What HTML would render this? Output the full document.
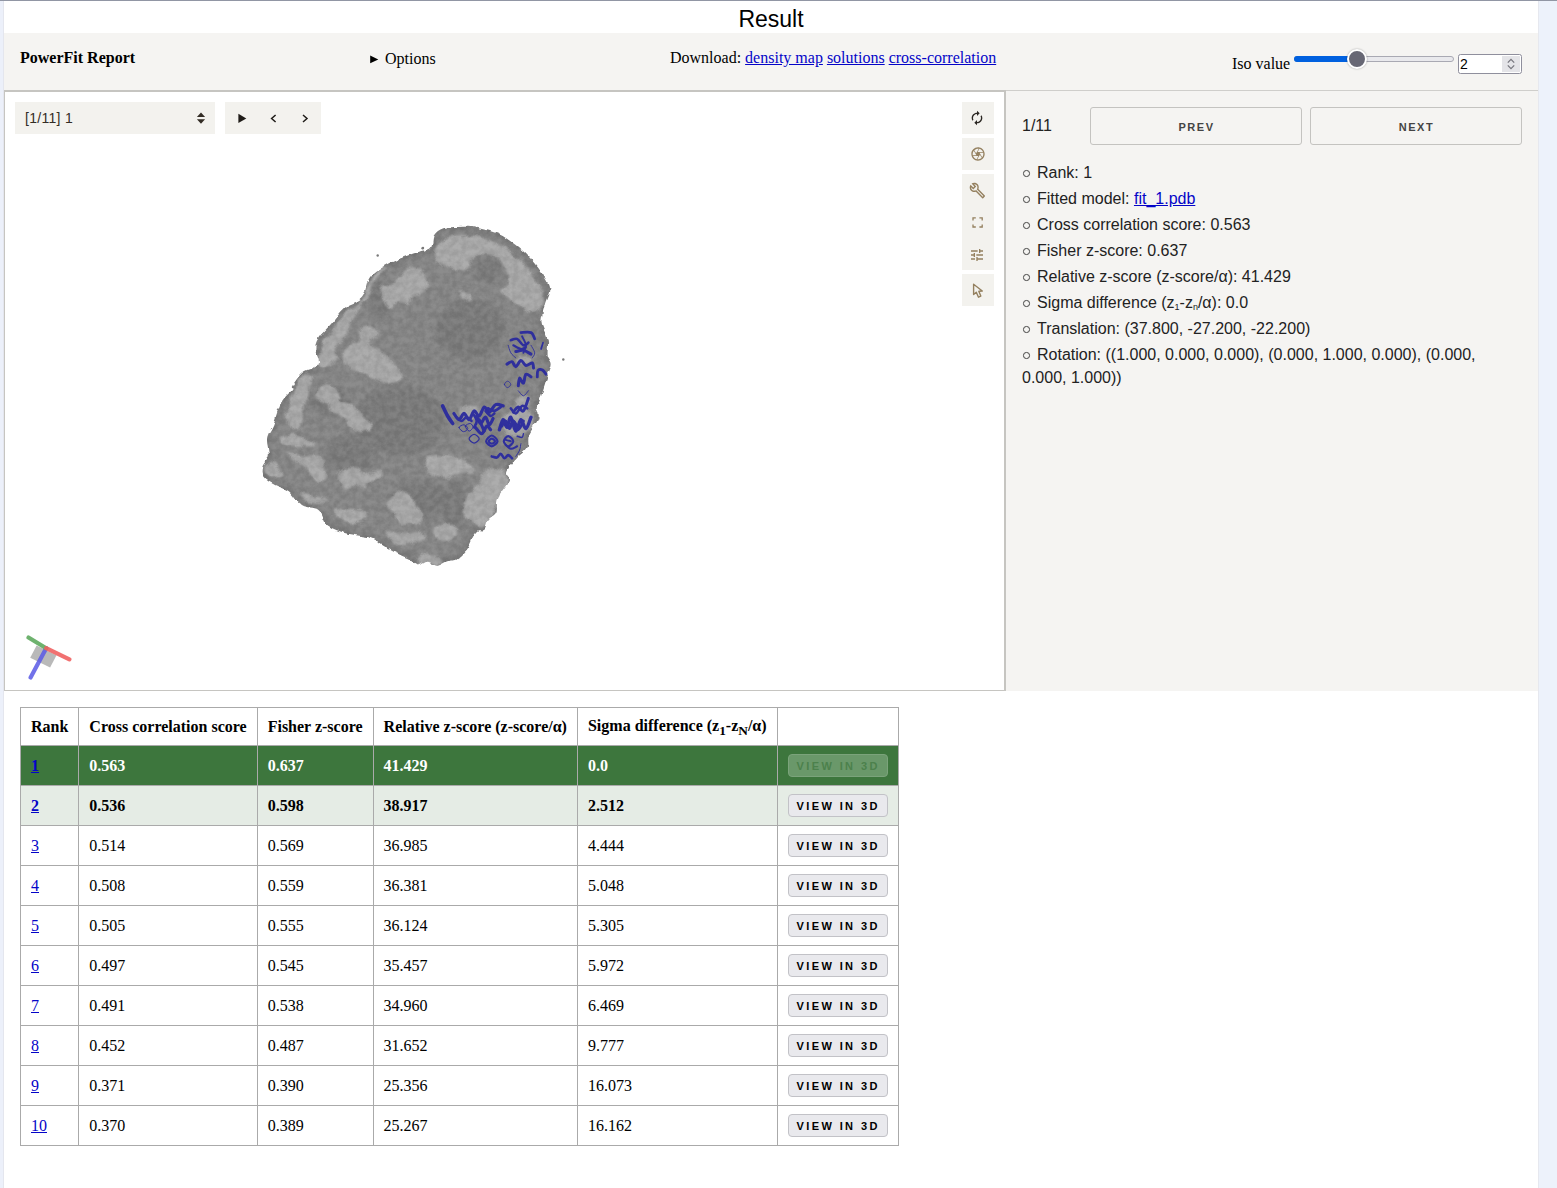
<!DOCTYPE html>
<html>
<head>
<meta charset="utf-8">
<title>Result</title>
<style>
html,body{margin:0;padding:0;}
body{width:1557px;height:1188px;position:relative;overflow:hidden;background:#fff;font-family:"Liberation Serif",serif;font-size:16px;color:#000;}
.abs{position:absolute;}
.sans{font-family:"Liberation Sans",sans-serif;}
a{color:#0404c8;text-decoration:underline;}
#lstrip{left:0;top:0;width:4px;height:1188px;background:#ecf0fa;border-right:1px solid #e4e6ee;box-sizing:border-box;}
#rstrip{left:1538px;top:0;width:19px;height:1188px;background:#edf2fb;border-left:1px solid #e6e8ef;box-sizing:border-box;}
#topline{left:0;top:0;width:1557px;height:1px;background:#9196a4;}
#title{left:4px;top:5px;width:1534px;text-align:center;font-family:"Liberation Sans",sans-serif;font-size:23px;line-height:28px;color:#000;}
#hdr{left:4px;top:33px;width:1534px;height:57px;background:#f5f4f2;}
#hdrline{left:4px;top:90px;width:1534px;height:1px;background:#cfcecb;}
#viewer{left:4px;top:90px;width:1002px;height:601px;background:#fff;border:1px solid #c6c5c1;border-top-width:2px;border-right-width:2px;box-sizing:border-box;}
#side{left:1006px;top:91px;width:532px;height:600px;background:#f5f4f2;}
.ctl{background:#f3f2ee;}
.ic{background:#f3f2ee;width:32px;}
ul#info{list-style:none;margin:0;padding:0;left:1022px;top:161px;width:500px;font-family:"Liberation Sans",sans-serif;font-size:16px;line-height:23px;color:#222;}
ul#info li{margin:0 0 3px 0;padding:0;}
ul#info li:before{content:"";display:inline-block;width:4.5px;height:4.5px;border:1px solid #444;border-radius:50%;margin:0 7.5px 1px 1px;vertical-align:middle;}
.navbtn{height:38px;box-sizing:border-box;border:1px solid #c4c3c0;border-radius:3px;background:#f5f4f2;font-family:"Liberation Sans",sans-serif;font-weight:bold;font-size:11px;letter-spacing:1.5px;color:#444;text-align:center;line-height:39px;text-indent:1px;}
table#res{border-collapse:collapse;left:20px;top:707px;font-family:"Liberation Serif",serif;font-size:16px;}
table#res th,table#res td{border:1px solid #aaa;padding:0 10px;height:40px;text-align:left;box-sizing:border-box;white-space:nowrap;}
table#res th{font-weight:bold;height:38px;}
tr.sel td{background:#3d763d;color:#fff;font-weight:bold;}
tr.hl td{background:#e5ece5;font-weight:bold;}
.vbtn{display:inline-block;width:100px;height:23px;box-sizing:border-box;border:1px solid #c2c2c7;border-radius:4px;background:#e9e9ed;font-family:"Liberation Sans",sans-serif;font-weight:bold;font-size:11px;letter-spacing:2.4px;line-height:23px;text-indent:1px;text-align:center;color:#000;vertical-align:middle;}
tr.sel .vbtn{background:#6a986a;border-color:#7ba37b;color:#4c814c;}
</style>
</head>
<body>
<div id="lstrip" class="abs"></div>
<div id="rstrip" class="abs"></div>
<div id="topline" class="abs"></div>
<div id="title" class="abs">Result</div>
<div id="hdr" class="abs"></div>
<div id="hdrline" class="abs"></div>
<div class="abs" style="left:20px;top:49px;font-weight:bold;font-size:16px;line-height:18px;">PowerFit Report</div>
<svg class="abs" style="left:368px;top:52px" width="14" height="14" viewBox="368 52 14 14"><path d="M370.200 55.500 L378.300 59.400 L370.200 63.300Z" fill="#000"/></svg>
<div class="abs" style="left:385px;top:50px;font-size:16px;line-height:18px;">Options</div>
<div class="abs" style="left:670px;top:49px;font-size:16px;line-height:18px;white-space:nowrap;">Download: <a>density map</a> <a>solutions</a> <a>cross-correlation</a></div>
<div class="abs" style="left:1232px;top:55px;font-size:16px;line-height:18px;">Iso value</div>
<!-- slider -->
<div class="abs" style="left:1294px;top:56px;width:160px;height:6px;box-sizing:border-box;border:1px solid #a9a9b3;border-radius:3px;background:#e9e9ed;"></div>
<div class="abs" style="left:1294px;top:56px;width:62px;height:6px;border-radius:3px 0 0 3px;background:#0060df;"></div>
<div class="abs" style="left:1346.700px;top:49px;width:16px;height:16px;border:2px solid #fff;border-radius:50%;background:#676774;box-shadow:0 0 2px rgba(0,0,0,.35);"></div>
<!-- number -->
<div class="abs sans" style="left:1458px;top:54px;width:64px;height:20px;box-sizing:border-box;border:1px solid #8f8f9d;border-radius:2.5px;background:#fff;font-size:14px;line-height:19px;padding-left:1px;">2</div>
<div class="abs" style="left:1502px;top:56px;width:18px;height:16px;background:#e4e4e8;"></div>
<svg class="abs" style="left:1502px;top:56px" width="18" height="16" viewBox="0 0 18 16"><path d="M5.800 6.600 L9 3.400 L12.200 6.600 M5.800 9.400 L9 12.600 L12.200 9.400" fill="none" stroke="#77777f" stroke-width="1.3"/></svg>

<div id="viewer" class="abs"></div>
<!--BLOB-START--><svg class="abs" style="left:0;top:0" width="1005" height="690" viewBox="0 0 1005 690">
<defs><filter id="b1" x="-20%" y="-20%" width="140%" height="140%" color-interpolation-filters="sRGB"><feGaussianBlur stdDeviation="1.1" result="g"/><feTurbulence type="fractalNoise" baseFrequency="0.09" numOctaves="2" seed="5" result="t"/><feDisplacementMap in="g" in2="t" scale="7" xChannelSelector="R" yChannelSelector="G"/></filter><filter id="b2" x="-20%" y="-20%" width="140%" height="140%"><feGaussianBlur stdDeviation="2.5"/></filter><filter id="rg" x="-5%" y="-5%" width="110%" height="110%" color-interpolation-filters="sRGB"><feTurbulence type="fractalNoise" baseFrequency="0.13" numOctaves="2" seed="2" result="t"/><feDisplacementMap in="SourceGraphic" in2="t" scale="5" xChannelSelector="R" yChannelSelector="G" result="d"/><feGaussianBlur in="d" stdDeviation="0.75"/></filter><filter id="nz" x="0" y="0" width="100%" height="100%" color-interpolation-filters="sRGB"><feTurbulence type="fractalNoise" baseFrequency="0.16" numOctaves="4" seed="11"/><feColorMatrix type="matrix" values="2.2 0 0 0 -0.6  2.2 0 0 0 -0.6  2.2 0 0 0 -0.6  0 0 0 0 0.06"/></filter><mask id="bm" maskUnits="userSpaceOnUse" x="250" y="215" width="320" height="365"><path d="M420.0 251.6 C424.2 250.2 428.6 250.4 430.9 247.7 C433.2 245.0 431.9 238.5 434.0 235.2 C436.1 232.0 439.2 229.6 443.4 228.2 C447.5 226.9 453.7 227.3 458.9 227.1 C464.1 227.0 468.0 226.4 474.5 227.5 C481.0 228.6 491.1 230.8 497.9 233.7 C504.6 236.5 509.8 240.7 515.0 244.6 C520.2 248.5 524.6 252.4 529.0 257.1 C533.4 261.7 538.1 267.4 541.5 272.6 C544.9 277.8 548.8 282.8 549.3 288.2 C549.8 293.7 545.9 299.6 544.6 305.3 C543.3 311.1 541.0 316.8 541.5 322.5 C542.0 328.2 546.7 334.2 547.7 339.6 C548.8 345.1 547.1 351.0 547.7 355.2 C548.4 359.3 551.9 360.4 551.6 364.5 C551.4 368.7 548.1 374.2 546.2 380.1 C544.2 386.0 541.5 395.5 539.9 400.0 C538.4 404.6 537.1 404.1 536.8 407.1 C536.6 410.1 539.7 413.4 538.4 418.0 C537.1 422.7 530.9 430.2 529.0 435.2 C527.2 440.1 529.6 443.7 527.5 447.6 C525.4 451.5 519.9 454.6 516.6 458.5 C513.2 462.4 508.5 467.1 507.2 471.0 C505.9 474.9 510.3 477.2 508.8 481.9 C507.2 486.6 500.0 493.8 497.9 499.0 C495.8 504.2 497.9 509.5 496.3 513.1 C494.8 516.6 490.5 517.8 488.5 520.6 C486.5 523.4 486.3 528.1 484.4 529.8 C482.5 531.5 479.3 529.3 477.2 530.8 C475.1 532.3 473.7 535.9 472.0 539.0 C470.3 542.1 469.4 545.9 466.9 549.3 C464.4 552.6 460.4 557.1 457.1 559.1 C453.9 561.1 450.8 560.1 447.4 561.2 C444.0 562.3 440.0 565.7 436.6 565.8 C433.2 565.9 430.1 561.8 426.8 561.7 C423.5 561.6 420.1 565.8 417.0 565.3 C413.9 564.8 412.0 560.8 408.3 558.6 C404.6 556.5 399.3 554.6 395.0 552.4 C390.7 550.2 386.6 547.6 382.6 545.2 C378.7 542.8 377.3 540.0 371.3 538.0 C365.3 536.0 353.8 535.4 346.6 533.3 C339.3 531.2 332.6 529.4 327.9 525.5 C323.2 521.6 322.9 513.3 318.5 509.9 C314.1 506.6 306.3 508.4 301.4 505.3 C296.5 502.1 293.4 494.6 288.9 491.2 C284.5 487.9 279.1 487.4 274.9 485.0 C270.8 482.7 266.0 480.3 264.0 477.2 C262.1 474.1 262.5 470.0 263.2 466.3 C264.0 462.7 268.0 460.1 268.7 455.4 C269.3 450.7 266.4 443.5 267.1 438.3 C267.9 433.1 271.0 430.2 273.4 424.3 C275.7 418.3 278.0 408.2 281.2 402.5 C284.3 396.7 290.2 392.7 292.1 390.0 C293.9 387.3 290.2 389.3 292.1 386.3 C293.9 383.4 298.5 376.0 303.0 372.3 C307.4 368.7 316.5 368.4 318.5 364.5 C320.6 360.6 315.4 353.4 315.4 349.0 C315.4 344.5 315.9 342.2 318.5 338.1 C321.1 333.9 326.6 329.1 331.0 324.0 C335.4 319.0 339.8 312.1 345.0 307.7 C350.2 303.3 358.0 302.6 362.1 297.6 C366.3 292.5 365.8 282.8 369.9 277.3 C374.1 271.9 381.1 268.3 387.1 264.8 C393.0 261.3 400.3 258.5 405.8 256.3 C411.3 254.1 415.8 253.0 420.0 251.6Z" fill="#fff" filter="url(#rg)"/></mask></defs>
<g mask="url(#bm)">
<rect x="250" y="215" width="320" height="365" fill="#858585"/>
<path d="M420.0 251.6 C424.2 250.2 428.6 250.4 430.9 247.7 C433.2 245.0 431.9 238.5 434.0 235.2 C436.1 232.0 439.2 229.6 443.4 228.2 C447.5 226.9 453.7 227.3 458.9 227.1 C464.1 227.0 468.0 226.4 474.5 227.5 C481.0 228.6 491.1 230.8 497.9 233.7 C504.6 236.5 509.8 240.7 515.0 244.6 C520.2 248.5 524.6 252.4 529.0 257.1 C533.4 261.7 538.1 267.4 541.5 272.6 C544.9 277.8 548.8 282.8 549.3 288.2 C549.8 293.7 545.9 299.6 544.6 305.3 C543.3 311.1 541.0 316.8 541.5 322.5 C542.0 328.2 546.7 334.2 547.7 339.6 C548.8 345.1 547.1 351.0 547.7 355.2 C548.4 359.3 551.9 360.4 551.6 364.5 C551.4 368.7 548.1 374.2 546.2 380.1 C544.2 386.0 541.5 395.5 539.9 400.0 C538.4 404.6 537.1 404.1 536.8 407.1 C536.6 410.1 539.7 413.4 538.4 418.0 C537.1 422.7 530.9 430.2 529.0 435.2 C527.2 440.1 529.6 443.7 527.5 447.6 C525.4 451.5 519.9 454.6 516.6 458.5 C513.2 462.4 508.5 467.1 507.2 471.0 C505.9 474.9 510.3 477.2 508.8 481.9 C507.2 486.6 500.0 493.8 497.9 499.0 C495.8 504.2 497.9 509.5 496.3 513.1 C494.8 516.6 490.5 517.8 488.5 520.6 C486.5 523.4 486.3 528.1 484.4 529.8 C482.5 531.5 479.3 529.3 477.2 530.8 C475.1 532.3 473.7 535.9 472.0 539.0 C470.3 542.1 469.4 545.9 466.9 549.3 C464.4 552.6 460.4 557.1 457.1 559.1 C453.9 561.1 450.8 560.1 447.4 561.2 C444.0 562.3 440.0 565.7 436.6 565.8 C433.2 565.9 430.1 561.8 426.8 561.7 C423.5 561.6 420.1 565.8 417.0 565.3 C413.9 564.8 412.0 560.8 408.3 558.6 C404.6 556.5 399.3 554.6 395.0 552.4 C390.7 550.2 386.6 547.6 382.6 545.2 C378.7 542.8 377.3 540.0 371.3 538.0 C365.3 536.0 353.8 535.4 346.6 533.3 C339.3 531.2 332.6 529.4 327.9 525.5 C323.2 521.6 322.9 513.3 318.5 509.9 C314.1 506.6 306.3 508.4 301.4 505.3 C296.5 502.1 293.4 494.6 288.9 491.2 C284.5 487.9 279.1 487.4 274.9 485.0 C270.8 482.7 266.0 480.3 264.0 477.2 C262.1 474.1 262.5 470.0 263.2 466.3 C264.0 462.7 268.0 460.1 268.7 455.4 C269.3 450.7 266.4 443.5 267.1 438.3 C267.9 433.1 271.0 430.2 273.4 424.3 C275.7 418.3 278.0 408.2 281.2 402.5 C284.3 396.7 290.2 392.7 292.1 390.0 C293.9 387.3 290.2 389.3 292.1 386.3 C293.9 383.4 298.5 376.0 303.0 372.3 C307.4 368.7 316.5 368.4 318.5 364.5 C320.6 360.6 315.4 353.4 315.4 349.0 C315.4 344.5 315.9 342.2 318.5 338.1 C321.1 333.9 326.6 329.1 331.0 324.0 C335.4 319.0 339.8 312.1 345.0 307.7 C350.2 303.3 358.0 302.6 362.1 297.6 C366.3 292.5 365.8 282.8 369.9 277.3 C374.1 271.9 381.1 268.3 387.1 264.8 C393.0 261.3 400.3 258.5 405.8 256.3 C411.3 254.1 415.8 253.0 420.0 251.6Z" fill="none" stroke="#777777" stroke-width="7" filter="url(#b2)"/>
<g filter="url(#b2)" fill="#7a7a7a">
<ellipse cx="488.5" cy="269.5" rx="14.0" ry="14.0"/>
<ellipse cx="470.0" cy="330.0" rx="35.0" ry="30.0"/>
<ellipse cx="400.0" cy="420.0" rx="45.0" ry="35.0"/>
<ellipse cx="350.0" cy="455.0" rx="25.0" ry="20.0"/>
<ellipse cx="420.0" cy="500.0" rx="30.0" ry="20.0"/>
<ellipse cx="330.0" cy="400.0" rx="20.0" ry="15.0"/>
<ellipse cx="455.0" cy="505.0" rx="12.0" ry="25.0"/>
<ellipse cx="380.0" cy="300.0" rx="10.0" ry="20.0"/>
</g>
<g filter="url(#b1)" fill="#b0b0b0" opacity="0.82">
<path d="M387.1 266.4 C386.6 268.2 377.7 275.2 374.6 280.4 C371.5 285.6 371.0 292.9 368.4 297.6 C365.8 302.2 362.1 303.5 359.0 308.5 C355.9 313.4 352.3 322.0 349.7 327.1 C347.1 332.3 346.1 336.2 343.5 339.6 C340.9 343.0 335.2 344.3 334.1 347.4 C333.1 350.5 338.3 354.9 337.2 358.3 C336.2 361.7 331.0 366.6 327.9 367.6 C324.8 368.7 319.8 367.6 318.5 364.5 C317.2 361.4 318.0 354.1 320.1 349.0 C322.2 343.8 327.1 339.1 331.0 333.4 C334.9 327.7 338.8 319.6 343.5 314.7 C348.1 309.8 354.9 309.0 359.0 303.8 C363.2 298.6 365.3 289.2 368.4 283.5 C371.5 277.8 374.6 272.4 377.7 269.5 C380.8 266.7 387.6 264.6 387.1 266.4Z"/>
<path d="M405.8 268.0 C409.4 266.7 417.7 267.2 421.3 269.5 C425.0 271.9 427.6 278.1 427.6 282.0 C427.6 285.9 423.9 290.5 421.3 292.9 C418.7 295.2 414.1 294.2 412.0 296.0 C409.9 297.8 411.0 302.7 408.9 303.8 C406.8 304.8 402.6 301.4 399.5 302.2 C396.4 303.0 392.5 308.5 390.2 308.5 C387.9 308.5 387.1 305.6 385.5 302.2 C384.0 298.9 380.1 291.3 380.8 288.2 C381.6 285.1 387.1 285.4 390.2 283.5 C393.3 281.7 396.9 279.9 399.5 277.3 C402.1 274.7 402.1 269.3 405.8 268.0Z"/>
<path d="M360.6 327.1 C363.2 325.3 371.8 327.1 374.6 328.7 C377.5 330.3 378.8 334.4 377.7 336.5 C376.7 338.6 368.9 339.1 368.4 341.2 C367.9 343.2 371.8 346.6 374.6 349.0 C377.5 351.3 381.9 352.1 385.5 355.2 C389.1 358.3 393.6 363.8 396.4 367.6 C399.3 371.5 403.7 376.0 402.6 378.6 C401.6 381.1 394.3 383.0 390.2 383.2 C386.0 383.5 381.9 381.9 377.7 380.1 C373.6 378.3 369.4 374.1 365.3 372.3 C361.1 370.5 356.4 370.8 352.8 369.2 C349.2 367.6 345.0 365.8 343.5 363.0 C341.9 360.1 342.2 354.9 343.5 352.1 C344.8 349.2 348.7 347.9 351.2 345.8 C353.8 343.8 357.5 342.7 359.0 339.6 C360.6 336.5 358.0 329.0 360.6 327.1Z"/>
<path d="M303.0 373.9 C305.6 372.3 311.3 374.4 312.3 377.0 C313.3 379.6 310.2 385.6 309.2 389.5 C308.2 393.3 308.7 398.3 306.1 400.0 C303.5 401.8 295.2 402.3 293.6 400.0 C292.1 397.8 295.2 390.7 296.7 386.3 C298.3 382.0 300.4 375.4 303.0 373.9Z"/>
<path d="M323.2 384.8 C325.8 384.0 331.3 384.8 334.1 386.3 C337.0 387.9 339.6 391.8 340.3 394.1 C341.1 396.4 342.7 399.1 338.8 400.0 C334.9 401.0 320.4 401.6 317.0 400.0 C313.6 398.5 317.5 393.6 318.5 391.0 C319.6 388.5 320.6 385.6 323.2 384.8Z"/>
<path d="M296.7 390.0 C299.3 389.0 303.5 395.2 304.5 399.3 C305.6 403.5 303.7 410.0 303.0 414.9 C302.2 419.9 301.7 426.3 299.8 428.9 C298.0 431.5 294.1 431.8 292.1 430.5 C290.0 429.2 287.9 425.3 287.4 421.2 C286.9 417.0 287.4 410.8 288.9 405.6 C290.5 400.4 294.1 391.0 296.7 390.0Z"/>
<path d="M318.5 391.6 C321.1 390.3 330.5 389.7 334.1 391.6 C337.7 393.4 337.2 400.1 340.3 402.5 C343.5 404.8 348.7 403.2 352.8 405.6 C357.0 407.9 362.1 412.6 365.3 416.5 C368.4 420.4 371.5 426.6 371.5 428.9 C371.5 431.3 367.3 430.0 365.3 430.5 C363.2 431.0 361.6 432.8 359.0 432.1 C356.4 431.3 352.3 428.4 349.7 425.8 C347.1 423.2 346.6 418.8 343.5 416.5 C340.3 414.1 333.6 413.9 331.0 411.8 C328.4 409.7 330.0 406.1 327.9 404.0 C325.8 401.9 320.1 401.4 318.5 399.3 C317.0 397.3 315.9 392.9 318.5 391.6Z"/>
<path d="M281.2 438.3 C282.7 436.7 288.4 434.7 293.6 435.2 C298.8 435.7 309.2 439.6 312.3 441.4 C315.4 443.2 314.9 445.3 312.3 446.1 C309.7 446.9 301.4 446.3 296.7 446.1 C292.1 445.8 286.9 445.8 284.3 444.5 C281.7 443.2 279.6 439.8 281.2 438.3Z"/>
<path d="M290.5 452.3 C292.6 452.0 299.8 456.5 304.5 457.0 C309.2 457.5 315.2 453.6 318.5 455.4 C321.9 457.2 323.5 464.2 324.8 467.9 C326.1 471.5 327.6 474.9 326.3 477.2 C325.0 479.6 319.6 482.4 317.0 481.9 C314.4 481.4 313.1 477.0 310.7 474.1 C308.4 471.3 306.1 467.4 303.0 464.8 C299.8 462.2 294.1 460.6 292.1 458.5 C290.0 456.5 288.4 452.6 290.5 452.3Z"/>
<path d="M343.5 469.4 C346.6 467.6 354.4 467.1 357.5 467.9 C360.6 468.7 358.3 473.6 362.1 474.1 C366.0 474.6 377.5 470.5 380.8 471.0 C384.2 471.5 384.7 475.4 382.4 477.2 C380.1 479.0 369.7 480.1 366.8 481.9 C364.0 483.7 367.1 487.9 365.3 488.1 C363.4 488.4 359.0 483.2 355.9 483.5 C352.8 483.7 349.4 490.5 346.6 489.7 C343.7 488.9 339.3 482.2 338.8 478.8 C338.3 475.4 340.3 471.3 343.5 469.4Z"/>
<path d="M267.1 463.2 C268.7 461.9 272.3 461.4 274.9 463.2 C277.5 465.0 283.2 471.8 282.7 474.1 C282.2 476.4 274.7 477.7 271.8 477.2 C269.0 476.7 266.4 473.3 265.6 471.0 C264.8 468.7 265.6 464.5 267.1 463.2Z"/>
<path d="M334.1 508.4 C335.9 507.1 344.5 509.4 349.7 509.9 C354.9 510.5 362.4 509.9 365.3 511.5 C368.1 513.1 368.9 517.5 366.8 519.3 C364.7 521.1 357.5 522.7 352.8 522.4 C348.1 522.1 341.9 520.1 338.8 517.7 C335.7 515.4 332.3 509.7 334.1 508.4Z"/>
<path d="M399.5 491.2 C403.2 490.7 409.4 493.6 412.0 495.9 C414.6 498.3 413.3 502.1 415.1 505.3 C416.9 508.4 422.4 511.2 422.9 514.6 C423.4 518.0 420.6 524.2 418.2 525.5 C415.9 526.8 412.0 522.7 408.9 522.4 C405.8 522.1 402.1 525.5 399.5 524.0 C396.9 522.4 395.4 516.2 393.3 513.1 C391.2 509.9 387.6 507.6 387.1 505.3 C386.6 502.9 388.1 501.4 390.2 499.0 C392.3 496.7 395.9 491.8 399.5 491.2Z"/>
<path d="M384.0 530.2 C384.5 528.4 393.3 532.8 399.5 533.3 C405.8 533.8 416.9 532.5 421.3 533.3 C425.8 534.1 427.6 536.4 426.0 538.0 C424.5 539.5 416.9 541.6 412.0 542.6 C407.1 543.7 401.1 546.3 396.4 544.2 C391.7 542.1 383.4 532.0 384.0 530.2Z"/>
<path d="M301.4 494.4 C302.4 493.6 311.0 496.7 315.4 497.5 C319.8 498.3 326.3 498.3 327.9 499.0 C329.4 499.8 327.9 501.6 324.8 502.1 C321.7 502.7 313.1 503.4 309.2 502.1 C305.3 500.9 300.4 495.1 301.4 494.4Z"/>
<path d="M426.2 457.0 C428.6 454.9 435.3 455.4 440.2 455.4 C445.2 455.4 450.6 455.4 455.8 457.0 C461.0 458.5 468.5 462.2 471.4 464.8 C474.3 467.4 474.5 471.0 473.0 472.6 C471.4 474.1 466.2 473.3 462.1 474.1 C457.9 474.9 453.0 477.0 448.0 477.2 C443.1 477.5 436.1 477.2 432.5 475.7 C428.8 474.1 427.3 471.0 426.2 467.9 C425.2 464.8 423.9 459.1 426.2 457.0Z"/>
<path d="M494.8 467.9 C498.4 468.9 505.9 472.6 507.2 477.2 C508.5 481.9 504.4 490.2 502.6 495.9 C500.7 501.6 499.4 506.6 496.3 511.5 C493.2 516.4 487.8 523.7 483.9 525.5 C480.0 527.3 476.6 524.5 473.0 522.4 C469.3 520.3 463.1 517.2 462.1 513.1 C461.0 508.9 463.9 502.4 466.7 497.5 C469.6 492.5 476.1 487.9 479.2 483.5 C482.3 479.0 482.8 473.6 485.4 471.0 C488.0 468.4 491.1 466.8 494.8 467.9Z"/>
<path d="M435.6 527.1 C438.2 525.0 447.5 522.9 451.2 524.0 C454.8 525.0 457.9 530.7 457.4 533.3 C456.9 535.9 451.7 539.0 448.0 539.5 C444.4 540.1 437.7 538.5 435.6 536.4 C433.5 534.3 433.0 529.1 435.6 527.1Z"/>
<path d="M420.0 555.1 C423.1 553.8 435.3 555.4 438.7 556.7 C442.1 558.0 443.4 561.6 440.2 562.9 C437.1 564.2 423.4 565.8 420.0 564.5 C416.6 563.2 416.9 556.4 420.0 555.1Z"/>
<path d="M435.6 250.8 C436.9 246.9 440.5 241.0 446.5 238.4 C452.5 235.8 463.6 234.7 471.4 235.2 C479.2 235.8 486.7 238.6 493.2 241.5 C499.7 244.3 505.2 248.5 510.3 252.4 C515.5 256.3 520.2 259.9 524.4 264.8 C528.5 269.8 532.1 277.3 535.3 282.0 C538.4 286.7 542.0 288.5 543.1 292.9 C544.1 297.3 543.8 305.3 541.5 308.5 C539.2 311.6 532.9 312.4 529.0 311.6 C525.1 310.8 522.8 306.9 518.1 303.8 C513.5 300.7 502.6 296.8 501.0 292.9 C499.4 289.0 508.0 284.6 508.8 280.4 C509.6 276.3 508.0 271.9 505.7 268.0 C503.3 264.1 498.9 259.4 494.8 257.1 C490.6 254.7 484.6 253.2 480.7 253.9 C476.9 254.7 474.0 258.9 471.4 261.7 C468.8 264.6 468.3 269.8 465.2 271.1 C462.1 272.4 457.1 271.1 452.7 269.5 C448.3 268.0 441.5 264.8 438.7 261.7 C435.8 258.6 434.3 254.7 435.6 250.8Z"/>
<path d="M420.0 277.3 C421.0 275.2 424.9 276.0 426.2 277.3 C427.5 278.6 428.0 282.8 427.8 285.1 C427.5 287.4 426.0 290.5 424.7 291.3 C423.4 292.1 420.8 292.1 420.0 289.8 C419.2 287.4 419.0 279.4 420.0 277.3Z"/>
<path d="M457.4 290.5 C457.9 290.0 461.5 290.7 463.6 291.3 C465.7 292.0 468.3 292.6 469.8 294.4 C471.4 296.3 473.2 301.2 473.0 302.2 C472.7 303.3 470.4 302.0 468.3 300.7 C466.2 299.4 462.3 296.1 460.5 294.4 C458.7 292.8 456.9 291.1 457.4 290.5Z"/>
<path d="M503.2 416.0 C506.5 411.8 520.9 407.5 525.9 408.4 C531.0 409.2 533.9 416.8 533.5 421.0 C533.1 425.2 528.0 431.5 523.4 433.6 C518.8 435.7 509.1 436.6 505.7 433.6 C502.3 430.7 499.8 420.2 503.2 416.0Z"/>
<path d="M460.3 408.4 C461.9 405.9 473.7 404.6 476.7 405.9 C479.6 407.1 479.6 413.4 477.9 416.0 C476.2 418.5 469.5 422.3 466.6 421.0 C463.6 419.7 458.6 410.9 460.3 408.4Z"/>
<path d="M515.8 398.3 C517.5 396.2 526.1 394.5 528.4 395.8 C530.7 397.0 531.4 403.8 529.7 405.9 C528.0 408.0 520.6 409.6 518.3 408.4 C516.0 407.1 514.1 400.4 515.8 398.3Z"/>
<path d="M518.3 356.6 C520.6 356.0 529.3 356.8 531.0 357.9 C532.6 358.9 530.7 362.3 528.4 362.9 C526.1 363.6 518.8 362.7 517.1 361.7 C515.4 360.6 516.0 357.2 518.3 356.6Z"/>
</g>
<rect x="250" y="215" width="320" height="365" filter="url(#nz)"/>
</g>
<g fill="none" stroke="#2b2b9e" stroke-linecap="round" stroke-linejoin="round" opacity="0.95">
<path d="M442.6 405.9 C443.4 407.5 445.9 413.0 447.6 416.0 C449.3 418.9 451.8 422.3 452.7 423.5" stroke-width="3.6"/>
<path d="M453.9 413.4 C454.8 414.5 457.3 419.7 459.0 419.7 C460.7 419.7 462.4 413.4 464.0 413.4 C465.7 413.4 467.4 420.2 469.1 419.7 C470.8 419.3 472.5 411.5 474.1 410.9 C475.8 410.3 477.5 416.6 479.2 416.0 C480.9 415.3 482.6 407.8 484.2 407.1 C485.9 406.5 487.4 412.6 489.3 412.2 C491.2 411.8 493.3 405.6 495.6 404.6 C497.9 403.5 501.9 405.6 503.2 405.9" stroke-width="3.2"/>
<path d="M456.5 417.2 C457.3 417.9 459.8 421.0 461.5 421.0 C463.2 421.0 464.9 417.2 466.6 417.2 C468.2 417.2 470.8 420.4 471.6 421.0" stroke-width="2.4"/>
<path d="M476.7 416.0 C477.3 417.2 479.0 423.3 480.5 423.5 C481.9 423.7 484.0 417.0 485.5 417.2 C487.0 417.4 488.0 424.6 489.3 424.8 C490.6 425.0 492.4 419.5 493.1 418.5" stroke-width="3.2"/>
<path d="M475.4 427.3 C476.5 428.4 479.8 433.8 481.7 433.6 C483.6 433.4 485.3 426.7 486.8 426.1 C488.2 425.4 489.9 429.2 490.6 429.8" stroke-width="3.2"/>
<path d="M479.2 419.7 C480.0 421.6 483.4 429.2 484.2 431.1" stroke-width="3.0"/>
<path d="M472.9 413.4 C473.5 414.7 476.5 418.7 476.7 421.0 C476.9 423.3 474.6 426.3 474.1 427.3" stroke-width="2.6"/>
<path d="M488.0 408.4 C489.1 408.8 492.2 411.1 494.3 410.9 C496.4 410.7 499.6 407.8 500.7 407.1" stroke-width="2.8"/>
<path d="M485.5 410.9 C486.3 411.8 489.1 415.5 490.6 416.0 C492.0 416.4 493.7 413.9 494.3 413.4" stroke-width="2.6"/>
<path d="M499.4 429.8 C500.0 428.2 501.9 420.2 503.2 419.7 C504.4 419.3 505.7 427.7 507.0 427.3 C508.2 426.9 509.3 416.6 510.8 417.2 C512.2 417.9 514.1 430.7 515.8 431.1 C517.5 431.5 519.2 420.2 520.9 419.7 C522.5 419.3 524.2 429.0 525.9 428.6 C527.6 428.2 530.1 419.1 531.0 417.2" stroke-width="3.4"/>
<path d="M501.9 426.1 C502.6 425.2 504.4 420.6 505.7 421.0 C507.0 421.4 508.2 428.6 509.5 428.6 C510.8 428.6 511.8 420.8 513.3 421.0 C514.8 421.2 516.6 429.8 518.3 429.8 C520.0 429.8 522.5 422.5 523.4 421.0" stroke-width="2.8"/>
<path d="M513.3 412.2 C514.1 411.3 516.6 407.3 518.3 407.1 C520.0 406.9 521.7 412.4 523.4 410.9 C525.1 409.4 527.6 400.4 528.4 398.3" stroke-width="3.0"/>
<path d="M510.8 408.4 C511.6 409.2 513.9 413.9 515.8 413.4 C517.7 413.0 520.2 406.7 522.1 405.9 C524.0 405.0 526.3 408.0 527.2 408.4" stroke-width="2.6"/>
<path d="M505.7 421.0 C506.3 421.9 508.2 426.1 509.5 426.1 C510.8 426.1 511.8 420.8 513.3 421.0 C514.8 421.2 517.5 426.3 518.3 427.3" stroke-width="2.6"/>
<path d="M486.1 441.2 C486.1 439.4 489.9 435.5 491.8 435.5 C493.7 435.5 497.5 439.4 497.5 441.2 C497.5 443.0 493.7 446.3 491.8 446.3 C489.9 446.3 486.1 443.0 486.1 441.2Z" stroke-width="2.2"/>
<path d="M488.7 441.2 C488.7 440.4 490.8 438.7 491.8 438.7 C492.9 438.7 495.0 440.4 495.0 441.2 C495.0 442.1 492.9 443.7 491.8 443.7 C490.8 443.7 488.7 442.1 488.7 441.2Z" stroke-width="2.2"/>
<path d="M503.8 441.2 C503.8 439.5 506.7 436.2 508.2 436.2 C509.8 436.2 513.3 439.5 513.3 441.2 C513.3 442.9 509.8 446.3 508.2 446.3 C506.7 446.3 503.8 442.9 503.8 441.2Z" stroke-width="2.2"/>
<path d="M505.7 439.9 C506.5 440.2 509.9 441.0 510.8 441.2" stroke-width="2.0"/>
<path d="M505.7 445.0 C506.5 445.6 508.9 448.6 510.8 448.8 C512.7 449.0 516.0 446.7 517.1 446.3" stroke-width="2.0"/>
<path d="M469.1 438.7 C469.1 437.2 472.5 434.3 474.1 434.3 C475.8 434.3 479.2 437.2 479.2 438.7 C479.2 440.2 475.8 443.1 474.1 443.1 C472.5 443.1 469.1 440.2 469.1 438.7Z" stroke-width="1.2"/>
<path d="M459.0 427.3 C459.1 426.2 462.6 424.6 464.0 424.8 C465.5 425.0 467.9 427.4 467.8 428.6 C467.7 429.7 464.9 432.0 463.4 431.7 C461.9 431.5 458.9 428.5 459.0 427.3Z" stroke-width="1.0"/>
<path d="M465.3 426.1 C465.5 424.8 469.1 423.3 470.4 423.5 C471.6 423.7 473.1 426.1 472.9 427.3 C472.7 428.6 470.4 431.3 469.1 431.1 C467.8 430.9 465.1 427.3 465.3 426.1Z" stroke-width="1.0"/>
<path d="M491.8 456.4 C492.7 456.6 495.4 458.0 496.9 457.6 C498.3 457.2 499.4 453.7 500.7 453.8 C501.9 453.9 503.2 458.0 504.4 458.3 C505.7 458.5 507.0 455.1 508.2 455.1 C509.5 455.1 511.4 457.7 512.0 458.3" stroke-width="2.6"/>
<path d="M515.8 456.4 C516.4 455.3 518.8 452.2 519.6 450.1 C520.4 447.9 520.6 444.8 520.9 443.7" stroke-width="1.0"/>
<path d="M517.1 436.2 C517.9 436.4 521.1 437.8 522.1 437.4 C523.2 437.0 523.2 434.3 523.4 433.6" stroke-width="1.4"/>
<path d="M520.9 332.6 C522.5 332.6 528.6 331.6 531.0 332.6 C533.3 333.7 534.1 337.9 534.7 338.9" stroke-width="2.8"/>
<path d="M510.8 340.2 C511.8 340.0 515.0 338.1 517.1 338.9 C519.2 339.8 521.5 344.6 523.4 345.3 C525.3 345.9 527.6 343.1 528.4 342.7" stroke-width="2.6"/>
<path d="M515.8 351.6 C517.1 351.4 520.9 349.9 523.4 350.3 C525.9 350.7 529.7 353.5 531.0 354.1" stroke-width="3.0"/>
<path d="M513.3 345.3 C514.5 345.9 518.8 348.7 520.9 349.0 C523.0 349.4 525.1 347.5 525.9 347.1" stroke-width="2.2"/>
<path d="M522.1 336.4 C522.8 337.9 525.7 342.5 525.9 345.3 C526.1 348.0 523.8 351.6 523.4 352.8" stroke-width="2.0"/>
<path d="M507.0 364.2 C507.8 363.8 510.5 361.2 512.0 361.7 C513.5 362.1 514.3 366.9 515.8 366.7 C517.3 366.5 519.2 360.6 520.9 360.4 C522.5 360.2 524.0 365.0 525.9 365.5 C527.8 365.9 531.0 362.5 532.2 362.9 C533.5 363.4 533.3 367.1 533.5 368.0" stroke-width="3.0"/>
<path d="M537.3 376.8 C537.4 375.8 537.1 371.7 537.9 370.5 C538.7 369.3 541.0 369.2 542.3 369.9 C543.7 370.5 545.5 373.6 546.1 374.3" stroke-width="2.8"/>
<path d="M518.3 385.7 C518.5 384.4 518.8 378.5 519.6 378.1 C520.4 377.7 522.3 383.8 523.4 383.1 C524.4 382.5 524.6 375.3 525.9 374.3 C527.2 373.2 530.1 376.4 531.0 376.8" stroke-width="3.0"/>
<path d="M541.1 349.0 C541.4 348.0 542.6 343.8 543.0 342.7" stroke-width="1.8"/>
<path d="M504.4 384.4 C504.4 383.3 506.5 381.2 507.6 381.2 C508.7 381.2 510.8 383.3 510.8 384.4 C510.8 385.4 508.7 387.6 507.6 387.6 C506.5 387.6 504.4 385.4 504.4 384.4Z" stroke-width="0.9"/>
<path d="M518.3 390.7 C519.2 391.5 521.7 395.8 523.4 395.8 C525.1 395.8 527.6 391.5 528.4 390.7" stroke-width="0.9"/>
<path d="M508.2 345.3 C508.7 346.5 509.5 350.7 510.8 352.8 C512.0 354.9 515.0 357.0 515.8 357.9" stroke-width="0.9"/>
<path d="M531.0 345.3 C531.6 346.5 534.5 350.7 534.7 352.8 C535.0 354.9 532.6 357.0 532.2 357.9" stroke-width="0.9"/>
</g>
<circle cx="423.0" cy="248.0" r="1.2" fill="#7a7a7a"/>
<circle cx="563.3" cy="359.5" r="1.2" fill="#7a7a7a"/>
<circle cx="377.7" cy="255.5" r="1.2" fill="#7a7a7a"/>
<circle cx="422.6" cy="248.2" r="1.2" fill="#7a7a7a"/>
</svg><!--BLOB-END-->
<div id="side" class="abs"></div>

<!-- viewer controls -->
<div class="abs ctl" style="left:15px;top:102px;width:200px;height:32px;"></div>
<div class="abs sans" style="left:25px;top:102px;font-size:14px;line-height:32px;color:#332d25;letter-spacing:0.3px;">[1/11] 1</div>
<svg class="abs" style="left:195px;top:110px" width="12" height="16" viewBox="0 0 12 16"><path d="M1.900 7 L6 2.400 L10.100 7Z M1.900 9.300 L6 13.800 L10.100 9.300Z" fill="#332d25"/></svg>
<div class="abs ctl" style="left:225px;top:102px;width:96px;height:32px;"></div>
<svg class="abs" style="left:225px;top:102px" width="96" height="32" viewBox="0 0 96 32"><path d="M13.4 11.8 L21.3 16.4 L13.4 21Z" fill="#1f1c18"/><path d="M50.6 13 L46.6 16.5 L50.6 20 M78 13 L82 16.5 L78 20" fill="none" stroke="#1f1c18" stroke-width="1.5"/></svg>
<!-- right icons -->
<div class="abs ic" style="left:962px;top:102px;height:32px;"></div>
<div class="abs ic" style="left:962px;top:138px;height:32px;"></div>
<div class="abs ic" style="left:962px;top:174px;height:96px;"></div>
<div class="abs ic" style="left:962px;top:274px;height:32px;"></div>
<svg class="abs" style="left:969.300px;top:110px" width="16" height="16" viewBox="0 0 24 24"><path fill="#2a2622" d="M12 6v3l4-4-4-4v3c-4.42 0-8 3.58-8 8 0 1.57.46 3.03 1.24 4.26L6.7 14.8c-.45-.83-.7-1.79-.7-2.8 0-3.31 2.69-6 6-6zm6.760 1.740L17.300 9.200c.44.84.7 1.790.7 2.800 0 3.310-2.690 6-6 6v-3l-4 4 4 4v-3c4.420 0 8-3.580 8-8 0-1.570-.46-3.030-1.240-4.260z"/></svg>
<svg class="abs" style="left:969.5px;top:146px" width="16" height="16" viewBox="0 0 24 24"><path fill="#94805f" d="M14.250 2.260l-.08-.04-.01.02C13.460 2.090 12.740 2 12 2 6.480 2 2 6.480 2 12s4.480 10 10 10 10-4.480 10-10c0-4.750-3.310-8.720-7.750-9.740zM19.410 9h-7.990l2.710-4.700c2.400.66 4.350 2.420 5.280 4.700zM13.100 4.080L10.270 9l-1.150 2L6.400 6.300C7.840 4.880 9.820 4 12 4c.37 0 .74.03 1.100.08zM5.700 7.090L8.540 12l1.150 2H4.260C4.100 13.360 4 12.690 4 12c0-1.850.64-3.550 1.700-4.910zM4.590 15h7.980l-2.710 4.700c-2.400-.67-4.340-2.420-5.270-4.700zm6.310 4.910L14.890 13l2.720 4.700C16.160 19.120 14.180 20 12 20c-.38 0-.74-.04-1.100-.09zm7.400-3l-4-6.910h5.430c.17.640.27 1.310.27 2 0 1.850-.64 3.550-1.700 4.910z"/></svg>
<svg class="abs" style="left:969px;top:181.800px" width="16.800" height="17.200" preserveAspectRatio="none" viewBox="0 0 24 24"><path fill="#94805f" d="M22.610 18.990l-9.080-9.080c.93-2.340.45-5.100-1.440-7C9.790.61 6.210.4 3.660 2.260L7.500 6.110 6.080 7.520 2.250 3.690C.39 6.230.6 9.820 2.900 12.110c1.860 1.860 4.570 2.350 6.890 1.480l9.110 9.110c.39.39 1.020.39 1.410 0l2.300-2.300c.4-.38.4-1.010 0-1.410zm-3 1.600l-9.460-9.460c-.61.45-1.290.72-2 .82-1.360.2-2.790-.21-3.830-1.250C3.370 9.760 2.930 8.500 3 7.260l3.090 3.090 4.240-4.240-3.090-3.090c1.240-.07 2.490.37 3.440 1.310 1.080 1.080 1.490 2.570 1.240 3.960-.12.710-.42 1.370-.88 1.960l9.450 9.450-.88.890z"/></svg>
<svg class="abs" style="left:962px;top:206px" width="32" height="32" viewBox="962 206 32 32"><path d="M973 220.400 V217.800 H975.800 M979.400 217.800 H982.200 V220.400 M982.200 224.400 V227 H979.400 M975.800 227 H973 V224.400" fill="none" stroke="#94805f" stroke-width="1.300"/></svg>
<svg class="abs" style="left:969.100px;top:246.600px" width="16" height="16" viewBox="0 0 24 24"><path fill="#94805f" d="M3 17v2h6v-2H3zM3 5v2h10V5H3zm10 16v-2h8v-2h-8v-2h-2v6h2zM7 9v2H3v2h4v2h2V9H7zm14 4v-2H11v2h10zm-6-4h2V7h4V5h-4V3h-2v6z"/></svg>
<svg class="abs" style="left:962px;top:274px" width="32" height="32" viewBox="0 0 32 32"><path d="M11.600 10.200 L11.600 20.600 L14.300 18.200 L16.500 23.200 L18.800 22.100 L16.800 17.300 L20.300 17 Z" fill="none" stroke="#94805f" stroke-width="1.4" stroke-linejoin="round"/></svg>
<!-- axes -->
<svg class="abs" style="left:10px;top:620px" width="80" height="70" viewBox="10 620 80 70"><path d="M36.600 645.600 L56.500 655.200 L50.100 667.400 L30.200 657.800Z" fill="#b9b9b9"/><path d="M46.200 648.200 L30.600 677.500" stroke="#5a5ae6" stroke-width="4.200" stroke-linecap="round" opacity="0.85"/><path d="M46.200 648.200 L28.500 637.500" stroke="#5faa5f" stroke-width="4.200" stroke-linecap="round" opacity="0.9"/><path d="M46.200 648.200 L69.400 659.300" stroke="#f06262" stroke-width="4.200" stroke-linecap="round" opacity="0.9"/></svg>

<!-- side panel -->
<div class="abs sans" style="left:1022px;top:116px;font-size:16px;line-height:20px;color:#222;">1/11</div>
<div class="abs navbtn" style="left:1090px;top:107px;width:212px;">PREV</div>
<div class="abs navbtn" style="left:1310px;top:107px;width:212px;">NEXT</div>
<ul id="info" class="abs">
<li>Rank: 1</li>
<li>Fitted model: <a>fit_1.pdb</a></li>
<li>Cross correlation score: 0.563</li>
<li>Fisher z-score: 0.637</li>
<li>Relative z-score (z-score/α): 41.429</li>
<li>Sigma difference (z<sub style="font-size:9px;vertical-align:-2px;line-height:0">1</sub>-z<sub style="font-size:9px;vertical-align:-2px;line-height:0">n</sub>/α): 0.0</li>
<li>Translation: (37.800, -27.200, -22.200)</li>
<li>Rotation: ((1.000, 0.000, 0.000), (0.000, 1.000, 0.000), (0.000, 0.000, 1.000))</li>
</ul>

<table id="res" class="abs">
<tr><th>Rank</th><th>Cross correlation score</th><th>Fisher z-score</th><th>Relative z-score (z-score/α)</th><th><span style="position:relative;top:-1px;">Sigma difference (z<sub style="line-height:0">1</sub>-z<sub style="line-height:0">N</sub>/α)</span></th><th></th></tr>
<tr class="sel"><td><a>1</a></td><td>0.563</td><td>0.637</td><td>41.429</td><td>0.0</td><td><span class="vbtn">VIEW IN 3D</span></td></tr>
<tr class="hl"><td><a>2</a></td><td>0.536</td><td>0.598</td><td>38.917</td><td>2.512</td><td><span class="vbtn">VIEW IN 3D</span></td></tr>
<tr><td><a>3</a></td><td>0.514</td><td>0.569</td><td>36.985</td><td>4.444</td><td><span class="vbtn">VIEW IN 3D</span></td></tr>
<tr><td><a>4</a></td><td>0.508</td><td>0.559</td><td>36.381</td><td>5.048</td><td><span class="vbtn">VIEW IN 3D</span></td></tr>
<tr><td><a>5</a></td><td>0.505</td><td>0.555</td><td>36.124</td><td>5.305</td><td><span class="vbtn">VIEW IN 3D</span></td></tr>
<tr><td><a>6</a></td><td>0.497</td><td>0.545</td><td>35.457</td><td>5.972</td><td><span class="vbtn">VIEW IN 3D</span></td></tr>
<tr><td><a>7</a></td><td>0.491</td><td>0.538</td><td>34.960</td><td>6.469</td><td><span class="vbtn">VIEW IN 3D</span></td></tr>
<tr><td><a>8</a></td><td>0.452</td><td>0.487</td><td>31.652</td><td>9.777</td><td><span class="vbtn">VIEW IN 3D</span></td></tr>
<tr><td><a>9</a></td><td>0.371</td><td>0.390</td><td>25.356</td><td>16.073</td><td><span class="vbtn">VIEW IN 3D</span></td></tr>
<tr><td><a>10</a></td><td>0.370</td><td>0.389</td><td>25.267</td><td>16.162</td><td><span class="vbtn">VIEW IN 3D</span></td></tr>
</table>
</body>
</html>
